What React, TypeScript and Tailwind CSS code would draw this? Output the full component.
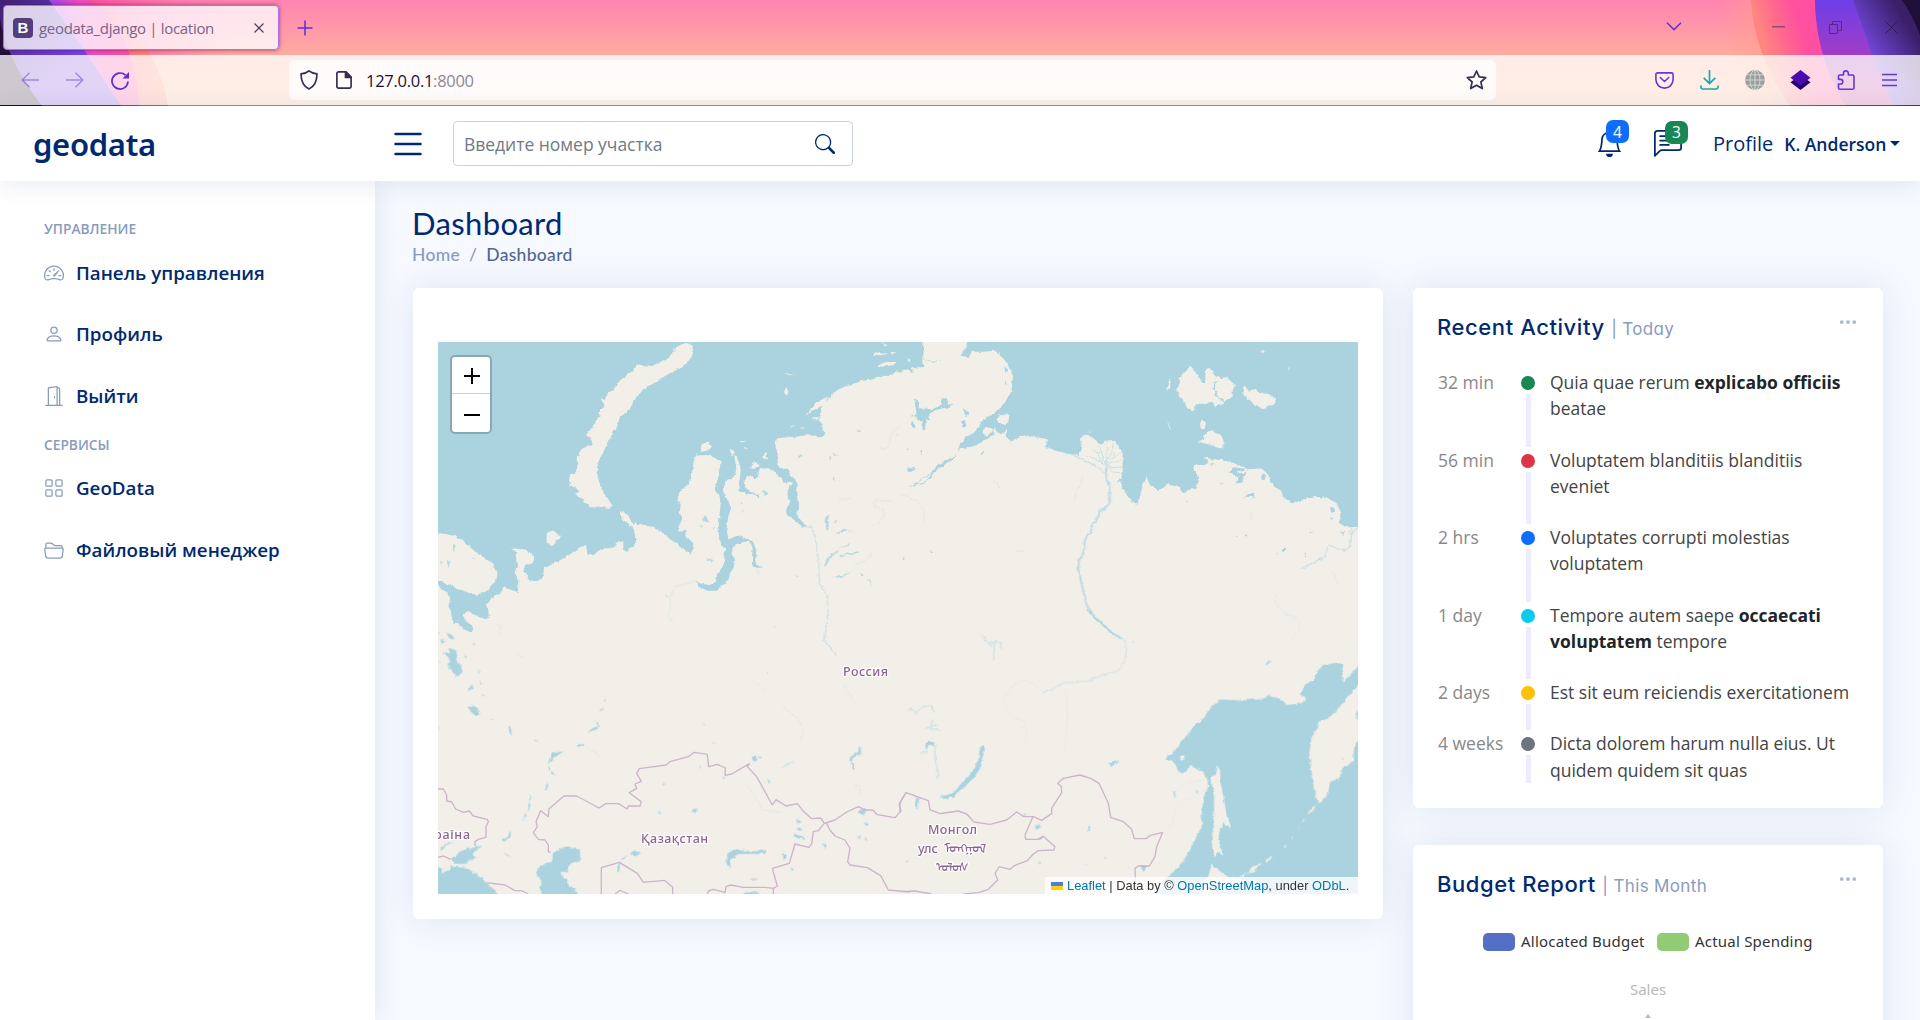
import React from "react";
import {
  BsBell,
  BsChatLeftText,
  BsDoorOpen,
  BsFolder2Open,
  BsGrid,
  BsList,
  BsPerson,
  BsSearch,
  BsSpeedometer2,
  BsThreeDots,
} from "react-icons/bs";

const OPEN = "font-['Open_Sans','Noto_Sans',sans-serif]";

function ThemeArt() {
  return (
    <svg className="absolute inset-0 h-full w-full" viewBox="0 0 1920 106" preserveAspectRatio="none" aria-hidden="true">
      <defs>
        <linearGradient id="sky" x1="0" y1="0" x2="0" y2="106" gradientUnits="userSpaceOnUse">
          <stop offset="0" stopColor="#ff84b2" />
          <stop offset="0.52" stopColor="#ffaba0" />
          <stop offset="1" stopColor="#ffc49a" />
        </linearGradient>
        <linearGradient id="leftPink" x1="50" y1="30" x2="120" y2="10" gradientUnits="userSpaceOnUse">
          <stop offset="0" stopColor="#8a45f0" />
          <stop offset="0.5" stopColor="#f04cc0" />
          <stop offset="1" stopColor="#ff4f9c" />
        </linearGradient>
        <linearGradient id="leftOrange" x1="90" y1="0" x2="175" y2="0" gradientUnits="userSpaceOnUse">
          <stop offset="0" stopColor="#ff4f9c" />
          <stop offset="1" stopColor="#ff9868" />
        </linearGradient>
        <linearGradient id="leftGlow" x1="90" y1="0" x2="240" y2="0" gradientUnits="userSpaceOnUse">
          <stop offset="0" stopColor="#ff4f9c" />
          <stop offset="1" stopColor="#ff84b2" stopOpacity="0" />
        </linearGradient>
        <linearGradient id="leftViolet" x1="0" y1="0" x2="60" y2="70" gradientUnits="userSpaceOnUse">
          <stop offset="0" stopColor="#3d2275" />
          <stop offset="1" stopColor="#7542e8" />
        </linearGradient>
        <linearGradient id="rightOrange" x1="1751" y1="0" x2="1790" y2="-12" gradientUnits="userSpaceOnUse">
          <stop offset="0" stopColor="#ff8580" />
          <stop offset="0.45" stopColor="#ff6a8c" />
          <stop offset="1" stopColor="#ff4fa0" />
        </linearGradient>
        <linearGradient id="rightGlow" x1="1715" y1="0" x2="1775" y2="-14" gradientUnits="userSpaceOnUse">
          <stop offset="0" stopColor="#ff9a8a" stopOpacity="0" />
          <stop offset="1" stopColor="#ffa090" />
        </linearGradient>
        <linearGradient id="rightViolet" x1="1830" y1="0" x2="1830" y2="106" gradientUnits="userSpaceOnUse">
          <stop offset="0" stopColor="#6c3fe8" />
          <stop offset="0.5" stopColor="#a03cc8" />
          <stop offset="1" stopColor="#d040a0" />
        </linearGradient>
        <linearGradient id="rightNight" x1="1858" y1="50" x2="1905" y2="20" gradientUnits="userSpaceOnUse">
          <stop offset="0" stopColor="#7c4df0" />
          <stop offset="1" stopColor="#3a2068" />
        </linearGradient>
      </defs>
      <rect width="1920" height="106" fill="url(#sky)" />
      <path d="M85 0 H240 V55 H150 Z" fill="url(#leftGlow)" />
      <path d="M80 0 H88 C130 18 160 55 168 106 H80Z" fill="url(#leftOrange)" />
      <path d="M40 0 H90 C118 18 138 60 139 106 H60Z" fill="url(#leftPink)" />
      <path d="M0 0H49 L86 53 L121 106 H0Z" fill="url(#leftViolet)" />
      <path d="M0 18 C4 45 18 75 42 106 H0Z" fill="#211038" />
      <path d="M1710 0 H1920 V106 H1740 Z" fill="url(#rightGlow)" />
      <path d="M1751 0 C1753 38 1768 75 1790 106 H1920 V0Z" fill="url(#rightOrange)" />
      <path d="M1815 0 C1815 35 1826 76 1846 106 H1920 V0Z" fill="url(#rightViolet)" />
      <path d="M1853 0 C1860 20 1866 35 1872 55 L1893 106 H1920 V0Z" fill="url(#rightNight)" />
      <path d="M1902 0 C1909 10 1917 25 1920 36 V0Z" fill="#1f0f38" />
    </svg>
  );
}

function BrowserChrome() {
  return (
    <div className={`relative flex h-[106px] w-full flex-col overflow-hidden ${OPEN}`}>
      <ThemeArt />
      <div className="relative flex h-[55px] items-start">
        <div className="mt-[5px] ml-[3px] flex h-[45px] w-[276px] items-center rounded-[4px] border border-[#b06cf0] bg-[#fffbfe]/80 pl-[9px] shadow-[0_0_4px_rgba(80,20,80,0.6)]">
          <div className="flex h-5 w-5 items-center justify-center rounded-[4px] bg-[#563d7c] font-['Liberation_Sans',sans-serif] text-[15px] leading-none font-bold text-white">B</div>
          <span className="ml-[6px] w-[215px] pt-[1px] text-[15px] tracking-[-0.310px] whitespace-nowrap text-[#79638a]">geodata_django | location</span>
          <svg className="h-[10px] w-[10px] shrink-0" viewBox="0 0 10 10" stroke="#4c3a5c" strokeWidth="1.2"><path d="M0.5 0.5 9.5 9.5M9.5 0.5 0.5 9.5" /></svg>
        </div>
        <svg className="mt-[20px] ml-[18px] h-4 w-4" viewBox="0 0 16 16" stroke="#5b2fd0" strokeWidth="1.5"><path d="M8 .5V15.5M.5 8H15.5" /></svg>
        <div className="flex-1" />
        <svg className="mt-[22px] mr-[90px] h-[9px] w-[16px]" viewBox="0 0 16 9" fill="none" stroke="#5b2fd0" strokeWidth="1.5"><path d="M1 .7 8 7.7 15 .7" /></svg>
        <svg className="mt-[26px] mr-[44px] h-[2px] w-[13px]" viewBox="0 0 13 2"><rect y="0.2" width="13" height="1.2" fill="#7c4070" /></svg>
        <svg className="mt-[21px] mr-[43px] h-[13px] w-[13px]" viewBox="0 0 13 13" fill="none" stroke="#552a80"><path d="M.5 3.5h8v9h-8zM3.5 3.5V.5h9v9h-4" /></svg>
        <svg className="mt-[21px] mr-[22px] h-[13px] w-[13px]" viewBox="0 0 13 13" stroke="#33195c"><path d="M.5.5 12.5 12.5M12.5.5.5 12.5" /></svg>
      </div>
      <div className="relative flex h-[50px] items-center bg-[#fffdfb]/78">
        <svg className="ml-[21px] h-[16px] w-[18px]" viewBox="0 0 18 16" fill="none" stroke="#5b2fd0" strokeWidth="1.5" opacity=".45"><path d="M18 8H1M8.500 .7 1.200 8l7.300 7.300" /></svg>
        <svg className="ml-[27px] h-[16px] w-[18px]" viewBox="0 0 18 16" fill="none" stroke="#5b2fd0" strokeWidth="1.5" opacity=".45"><path d="M0 8H17M9.500 .7 16.800 8l-7.300 7.300" /></svg>
        <svg className="mt-[1px] ml-[27px] h-[18px] w-[18px]" viewBox="0 0 18 18" fill="none" stroke="#5b2fd0" strokeWidth="1.7"><path d="M17 9.500A8 8 0 1 1 14.500 3.200" /><path d="M18 0V6.500H11.500Z" fill="#5b2fd0" stroke="none" /></svg>
        <div className="ml-[160px] flex h-[40px] w-[1207px] items-center rounded-[5px] bg-white/80 pl-[11px]">
          <svg className="h-[20px] w-[18px]" viewBox="0 0 18 20" fill="none" stroke="#3b2c52" strokeWidth="1.7"><path d="M9 .9C6.800 2.900 4 3.600 1 3.800 1 10 2.200 15.800 9 19c6.800-3.200 8-9 8-15.200-3-.2-5.800-.9-8-2.900Z" strokeLinejoin="round" /></svg>
          <svg className="ml-[18px] h-[18px] w-[16px]" viewBox="0 0 16 18" fill="none" stroke="#3b2c52" strokeWidth="1.700"><path d="M2.500.9H10L15.100 6v9.500a1.600 1.600 0 0 1-1.600 1.600h-11A1.600 1.600 0 0 1 .9 15.500v-13A1.600 1.600 0 0 1 2.500.9Z" /><path d="M9.500.9V6.500H15Z" fill="#3b2c52" /></svg>
          <span className="mt-[3px] ml-[14px] text-[16.5px] tracking-[-0.28px] text-[#1a0f33]">127.0.0.1<span className="text-[#8f8599]">:8000</span></span>
          <svg className="mr-[9px] ml-auto h-[20px] w-[21px]" viewBox="0 0 21 20" fill="none" stroke="#3b2c52" strokeWidth="1.700" strokeLinejoin="round"><path d="M10.500 1 13.200 6.900 19.700 7.600 14.900 12 16.300 18.600 10.500 15.300 4.700 18.600 6.100 12 1.300 7.600 7.800 6.900Z" /></svg>
        </div>
        <svg className="ml-[159px] h-[17px] w-[19px]" viewBox="0 0 19 17" fill="none" stroke="#6a35d8" strokeWidth="1.600"><path d="M2.500.9h14a1.600 1.600 0 0 1 1.600 1.600V7.500a8.600 8.600 0 0 1-17.200 0V2.500A1.600 1.600 0 0 1 2.500.9Z" /><path d="M5.300 5.500 9.500 9.500 13.700 5.500" strokeLinecap="round" /></svg>
        <svg className="ml-[26px] h-[20px] w-[19px]" viewBox="0 0 19 20" fill="none" stroke="#17aab0" strokeWidth="1.700"><path d="M9.500 0V13M3.700 7.800 9.500 13.500 15.300 7.800M1 15.500v1.600A1.800 1.800 0 0 0 2.800 19H16.200A1.800 1.800 0 0 0 18 17.100V15.500" /></svg>
        <svg className="ml-[26px] h-[20px] w-[20px]" viewBox="0 0 20 20" fill="none"><circle cx="10" cy="10" r="9.900" fill="#9a9f9d" /><path d="M10 0V20M0 10H20M2 4.800H18M2 15.200H18" stroke="#d5d4d0" /><ellipse cx="10" cy="10" rx="5" ry="9.900" stroke="#d5d4d0" /></svg>
        <svg className="ml-[25px] h-[20px] w-[21px]" viewBox="0 0 21 20"><path d="M10.500 5 20.500 12.300 10.500 20 .5 12.300Z" fill="#240070" /><path d="M10.500 0 20.500 7.700 10.500 15.500.5 7.700Z" fill="#4a0bb0" /></svg>
        <svg className="ml-[26px] h-[20px] w-[18px]" viewBox="0 0 18 20" fill="none" stroke="#6a35d8" strokeWidth="1.600"><path d="M6.500 5V3.300a2.400 2.400 0 0 1 4.800 0V5H15.500a1.500 1.500 0 0 1 1.500 1.500V17.500A1.500 1.500 0 0 1 15.500 19.200H3A1.500 1.500 0 0 1 1.500 17.500V14H3.500a2.300 2.300 0 0 0 0-4.600H1.500V6.500A1.500 1.500 0 0 1 3 5Z" strokeLinejoin="round" /></svg>
        <svg className="ml-[27px] h-[14px] w-[15px]" viewBox="0 0 15 14" stroke="#6a35d8" strokeWidth="1.500"><path d="M0 1.500H15M0 7H15M0 12.500H15" /></svg>
      </div>
      <div className="relative h-px bg-black/30" />
    </div>
  );
}

function Header() {
  return (
    <header className="relative z-20 flex h-[75px] items-center bg-white text-[#012970] shadow-[0_2.5px_25px_rgba(1,41,112,0.1)]">
      <div className="w-[388px] pt-[2px] pl-[33px] font-['Noto_Sans',sans-serif] text-[31px] leading-none font-semibold tracking-[-0.3px]">geodata</div>
      <BsList className="h-[40px] w-[40px]" />
      <div className="ml-[25px] flex h-[45px] w-[400px] items-center justify-between rounded-[4px] border border-[#012970]/20 pr-[17px] pl-[10px]">
        <span className={`${OPEN} pt-[2px] text-[17.500px] tracking-[-0.03px] text-[#707a85]`}>Введите номер участка</span>
        <BsSearch className="h-[20px] w-[20px]" />
      </div>
      <div className="relative ml-[743px]">
        <BsBell className="h-[27px] w-[27px]" />
        <span className={`${OPEN} absolute -top-[10px] left-[10px] flex h-[23px] w-[23px] items-center justify-center rounded-[7px] bg-[#0d6efd] pt-[2px] text-[15.500px] text-white`}>4</span>
      </div>
      <div className="relative ml-[31px]">
        <BsChatLeftText className="h-[28px] w-[28px]" />
        <span className={`${OPEN} absolute -top-[9px] left-[11px] flex h-[23px] w-[23px] items-center justify-center rounded-[7px] bg-[#198754] pt-[2px] text-[15.500px] text-white`}>3</span>
      </div>
      <span className={`${OPEN} ml-[31px] text-[20px]`}>Profile</span>
      <span className={`${OPEN} ml-[11px] pt-[1px] text-[17.500px] font-semibold`}>K. Anderson</span>
      <span className="ml-[4px] h-0 w-0 border-x-[5px] border-t-[5px] border-x-transparent border-t-[#012970]" />
    </header>
  );
}

function NavItem({ icon, label }: { icon: React.ReactNode; label: string }) {
  return (
    <a className="mb-[6px] flex h-[55.5px] items-center pl-[19px] text-[18.750px] font-semibold text-[#012970]">
      <span className="mr-[12px] text-[20px] text-[#899bbd]">{icon}</span>
      <span className="whitespace-nowrap">{label}</span>
    </a>
  );
}

function Sidebar() {
  return (
    <aside className={`${OPEN} z-10 w-[375px] shrink-0 bg-white px-[25px] pt-[38px] shadow-[0_0_25px_rgba(1,41,112,0.1)]`}>
      <div className="h-[26px] pl-[19px] text-[13.750px] leading-[19px] font-semibold text-[#899bbd]">УПРАВЛЕНИЕ</div>
      <NavItem icon={<BsSpeedometer2 />} label="Панель управления" />
      <NavItem icon={<BsPerson />} label="Профиль" />
      <NavItem icon={<BsDoorOpen />} label="Выйти" />
      <div className="mt-[11px] h-[26px] pl-[19px] text-[13.750px] leading-[19px] font-semibold text-[#899bbd]">СЕРВИСЫ</div>
      <NavItem icon={<BsGrid />} label="GeoData" />
      <NavItem icon={<BsFolder2Open />} label="Файловый менеджер" />
    </aside>
  );
}

/* Each tile of the map is drawn on its own grid of thirds of a pixel. */
const NW = "translate(430 330) scale(.33333)";
const NE = "translate(900 330) scale(.33333)";
const SW = "translate(430 610) scale(.33333)";
const SE = "translate(900 610) scale(.33333)";

function MapDrawing() {
  return (
    <svg className="absolute inset-0 h-full w-full bg-[#f2efe9]" viewBox="438 342 920 552" aria-label="Map">
      <defs>
        <filter id="coast" x="400" y="300" width="1000" height="640" filterUnits="userSpaceOnUse" colorInterpolationFilters="sRGB">
          <feTurbulence type="fractalNoise" baseFrequency="0.2" numOctaves="3" seed="4" result="n" />
          <feDisplacementMap in="SourceGraphic" in2="n" scale="4" xChannelSelector="R" yChannelSelector="G" />
          <feGaussianBlur stdDeviation="0.4" />
        </filter>
      </defs>
      <g filter="url(#coast)" fill="#aad3df" stroke="none">
        <g transform={NW}>
          <path d="M-20 0H1480V112L1440 112 1425 118 1412 128 1398 124 1388 132 1370 138 1355 137 1335 146 1300 152 1275 160 1240 172 1222 180 1205 195 1192 212 1180 228 1172 245 1172 262 1165 270 1178 280 1178 300 1186 308 1180 320 1165 322 1150 314 1128 316 1100 320 1070 322 1040 326 1036 345 1044 362 1042 405 1055 412 1072 418 1078 432 1095 448 1103 462 1098 480 1102 510 1108 535 1100 550 1112 570 1128 588 1118 592 1100 575 1085 565 1072 560 1068 540 1078 520 1072 490 1075 470 1092 462 1085 455 1062 458 1050 440 1035 425 1015 415 990 415 985 428 988 440 975 448 962 440 950 440 942 455 948 475 965 485 985 495 993 508 975 494 940 490 925 480 928 455 932 420 928 400 920 380 912 375 916 395 922 415 918 435 905 445 888 455 878 480 885 495 895 512 903 535 895 560 890 595 895 628 918 622 935 618 955 628 972 640 978 660 982 675 975 690 980 705 1000 712 980 714 966 705 966 680 968 650 955 632 930 640 908 650 905 672 915 690 910 715 900 730 895 750 880 765 860 782 835 782 805 770 795 755 820 762 840 765 858 752 862 735 878 712 885 690 880 670 888 658 875 645 868 630 865 600 868 560 872 520 868 495 855 478 862 455 868 420 872 395 860 385 835 376 802 376 798 372 790 400 785 440 775 465 755 482 745 495 742 515 752 520 750 545 755 570 745 590 748 605 765 600 770 620 790 640 788 660 780 675 765 660 745 645 720 628 695 605 670 590 640 585 615 580 605 590 618 615 618 635 610 650 596 655 595 665 583 665 580 650 580 632 565 640 545 655 525 655 508 660 490 676 472 670 468 645 445 655 430 668 400 685 375 700 342 712 340 735 335 748 300 752 292 745 290 730 278 720 290 705 312 698 312 685 302 668 285 658 265 658 243 652 260 668 262 690 260 712 254 732 265 745 265 775 262 790 245 780 220 772 210 790 190 800 168 822 172 840 180 858 165 868 140 858 122 848 105 845 98 855 105 870 120 880 130 895 125 908 100 898 85 880 68 878 62 840 55 830 62 800 45 785 24 765 -20 750Z" />
          <path fill="#f2efe9" d="M-20 605 24 608 45 612 75 618 100 632 125 655 140 670 165 685 190 703 200 735 195 755 175 780 140 795 115 788 90 780 60 765 24 752 -20 740ZM768 38 785 45 790 62 785 80 770 100 745 118 715 132 690 148 660 165 640 180 620 200 605 225 598 240 585 250 570 262 560 290 550 305 540 325 530 345 518 370 505 395 503 440 510 465 520 488 535 508 546 525 540 537 520 532 498 530 480 528 462 515 440 495 435 485 450 490 435 470 420 470 417 450 420 432 435 432 442 410 440 380 455 365 460 350 485 345 480 325 468 315 480 300 495 280 508 262 510 240 525 230 512 205 525 210 535 190 550 180 560 165 575 145 605 125 625 103 650 110 690 100 715 85 728 65 740 50ZM570 543 585 548 608 578 612 588 600 587 580 570 570 558ZM350 610 368 600 390 618 370 645 350 642ZM815 340 830 335 848 352 830 362 812 366ZM900 362 908 358 912 372 905 376ZM1005 365 1015 385 1000 386ZM960 412 978 396 990 405 970 418ZM1068 172 1076 182 1070 200 1062 186ZM1065 132 1095 132 1070 136ZM1080 285 1100 286 1082 289ZM1110 290 1125 295 1112 297ZM930 332 955 335 935 336ZM942 350 955 354 945 357ZM1010 245 1016 248 1012 252ZM1325 75 1350 66 1375 72 1350 76ZM1350 40 1375 45 1365 48ZM1380 68 1400 70 1385 74ZM1340 108 1365 96 1400 96 1390 106 1360 110ZM1430 85 1440 88 1440 100ZM1160 215 1195 200 1185 225 1160 235 1125 258 1145 235ZM1145 262 1170 262 1160 270Z" />
          <g opacity=".8">
            <path d="M50 690 60 695 55 712ZM70 640 78 648 68 670ZM125 683 138 684 126 688ZM30 690 36 692 32 705ZM818 565 828 558 835 572 822 575ZM812 585 820 588 815 592ZM830 685 850 690 845 697ZM848 590 854 594 850 597ZM995 480 1018 490 1005 498ZM932 520 938 522 935 527ZM932 540 938 542 935 546ZM1106 375 1120 380 1108 384ZM1280 300 1292 302 1284 308ZM1400 312 1406 318 1400 320ZM1195 380 1205 385 1200 392ZM1208 368 1222 378 1212 378ZM1208 440 1214 444 1210 456ZM1186 560 1196 555 1197 595 1190 598 1184 575ZM1215 608 1240 596 1258 600 1225 608ZM1182 710 1190 685 1225 660 1220 668 1200 685 1190 705ZM1230 675 1285 664 1285 669 1235 678ZM1225 655 1252 645 1262 635 1255 648ZM1210 575 1220 572 1215 580ZM1252 605 1270 605 1255 608ZM1205 742 1262 728 1235 742ZM1290 728 1302 735 1295 740ZM1308 745 1322 752 1328 775 1320 755ZM1415 683 1425 686 1418 689ZM1430 415 1440 412 1440 424ZM705 795 712 800 706 806ZM1098 735 1104 738 1100 742Z" />
          </g>
        </g>
        <g transform={NE}>
          <path d="M0 0H1420V592L1374 590 1340 592 1318 580 1322 545 1310 520 1285 505 1250 500 1210 508 1180 518 1155 510 1145 485 1120 468 1110 450 1105 435 1085 415 1045 418 1000 398 965 390 935 388 912 380 925 395 915 405 882 405 880 420 890 430 895 450 890 475 865 480 850 490 835 472 810 463 790 470 775 480 750 465 740 442 728 465 720 500 710 524 700 520 680 495 665 470 668 435 668 370 660 355 640 330 615 332 605 345 580 325 560 312 540 325 545 360 535 375 500 370 460 360 437 350 445 328 400 320 375 316 350 325 330 335 322 318 290 312 270 322 240 340 215 350 180 355 165 382 125 410 100 430 95 440 75 455 40 470 40 466 75 452 92 435 100 422 115 405 150 385 172 370 178 345 195 325 220 310 235 290 250 270 270 258 300 235 325 205 335 180 338 145 330 115 318 95 305 80 285 62 250 65 215 65 208 80 182 78 195 55 200 25 70 25 63 50 70 72 60 85 20 85 38 120 35 130 20 110 0 115Z" />
          <path fill="#f2efe9" d="M872 108 885 125 895 135 905 158 915 160 918 118 930 115 945 138 962 145 980 142 1008 168 998 178 998 200 975 212 955 200 945 180 946 160 957 152 944 155 940 175 945 198 960 208 975 215 965 222 945 228 935 215 905 222 888 220 882 242 865 235 850 215 835 195 832 180 840 155 838 145 850 128ZM1033 165 1045 182 1065 178 1080 190 1105 192 1128 205 1120 225 1090 235 1065 228 1050 210 1030 195ZM808 145 814 165 805 182 799 180ZM905 272 918 275 915 295 905 298 900 285ZM935 300 960 312 970 330 970 354 945 348 915 340 892 340 912 330 915 310ZM800 275 815 298 810 298ZM1080 66 1096 62 1088 70ZM1163 112 1170 114 1166 120ZM298 252 328 255 325 275 315 286 290 270ZM250 298 265 290 278 300 262 318 248 310ZM280 290 300 312 315 310 322 296 320 320 285 322ZM565 298 572 302 566 306Z" />
          <path d="M42 205 58 215 55 235 95 238 125 225 128 205 140 205 145 222 165 226 140 232 100 242 88 250 90 270 78 270 75 300 65 300 66 275 45 262 30 262 50 252ZM35 275 44 280 42 298 36 295ZM190 235 205 250 200 258 190 250ZM182 278 195 272 202 284 190 290ZM60 362 70 365 65 375ZM20 415 48 415 45 420 30 426 18 424ZM245 368 252 362 252 370 244 375ZM65 85 95 95 125 94 95 99ZM90 660 98 664 93 670ZM20 355 28 357 22 360ZM313 110 322 120 316 130ZM312 150 322 165 313 162ZM932 398 942 398 938 408ZM985 425 1000 412 1040 416 1010 425 1030 432 1045 418 1025 458 1005 460 1018 440 1000 438ZM1088 430 1098 435 1094 450 1086 445ZM960 455 968 460 962 464ZM1030 505 1045 492 1060 492 1066 504 1048 500ZM1290 535 1304 535 1305 545 1294 548ZM1290 562 1300 565 1296 574ZM1320 605 1332 602 1330 616ZM1033 615 1043 612 1038 620ZM1007 620 1013 622 1009 625ZM1230 602 1242 603 1232 606ZM1145 660 1160 650 1150 668ZM1214 667 1222 672 1215 680ZM1130 672 1136 674 1132 678ZM1100 670 1104 672 1101 675ZM655 445 668 448 668 458 655 456ZM858 512 865 516 860 520ZM555 700 563 702 558 705ZM5 682 14 687 8 690Z" />
          <path fill="none" stroke="#c4dee4" strokeWidth="3" opacity=".9" d="M612 408 598 380 580 360M612 408 606 365 595 345M614 405 622 370 618 340M615 402 632 375 640 345M616 402 645 382 662 365M618 404 650 395 668 392M618 406 645 412 668 412M618 408 640 425 665 430M610 400 585 385 560 378M606 365 590 372M645 382 640 362" />
        </g>
        <g transform={SW}>
          <path d="M-20 768 24 768 35 775 35 790 60 780 62 768 90 772 110 772 135 790 160 810 178 828 195 840 206 870H-20ZM62 745 75 740 88 725 120 715 158 706 140 720 128 730 138 745 115 750 108 762 78 762 65 755ZM412 712 450 718 450 755 425 758 412 775 415 787 392 785 400 800 412 808 415 825 442 842 440 870H340L330 835 335 815 318 787 330 768 365 755 368 730 390 716ZM887 750 895 728 920 718 950 722 980 724 1010 720 1005 730 960 732 925 732 900 750 903 775 890 765ZM1055 730 1066 733 1070 745 1058 748ZM940 850 970 842 988 846 975 860H940ZM1288 600 1305 596 1308 608 1298 616 1288 608ZM1300 638 1318 642 1310 648ZM1090 670 1122 682 1126 690 1095 682ZM1104 630 1118 636 1100 640ZM1098 655 1112 652 1112 665ZM1175 702 1187 702 1184 714ZM1282 685 1290 674 1288 688ZM1303 680 1314 692 1306 690ZM1080 768 1092 776 1086 780ZM965 805 985 808 968 811ZM785 605 790 596 803 596 795 608ZM684 600 690 604 686 616ZM700 518 706 522 698 528ZM562 770 570 758 568 790 563 785ZM570 750 580 740 592 736 578 748ZM600 728 610 720 630 732 615 740ZM965 445 975 438 982 448 970 456ZM985 440 998 440 986 446ZM1012 508 1020 512 1018 524ZM878 500 886 502 882 508ZM1053 475 1095 446 1070 468ZM808 470 812 472 808 476ZM848 395 858 398 848 400ZM1008 186 1015 188 1010 192ZM1030 52 1048 50 1034 54ZM820 342 827 343 822 346ZM435 405 450 402 465 408 448 412ZM365 435 375 424 398 424 378 438 365 452 352 462 358 448ZM352 465 362 478 358 485ZM365 485 375 497 362 495ZM343 540 352 515 355 522 346 542ZM298 555 305 558 297 578ZM295 580 302 582 295 605ZM285 612 292 610 280 632ZM218 690 235 675 245 660 240 680 222 695ZM220 725 250 742 225 732ZM237 348 244 350 244 376 237 365ZM312 388 325 396 318 398ZM505 300 520 292 522 282 520 300ZM520 270 530 268 522 275ZM473 370 485 355 503 348 495 335 506 340 502 355ZM113 232 128 228 130 238 118 242ZM112 290 130 290 122 278 135 292 148 298 150 312 140 320 125 308ZM40 125 60 130 55 112 80 122 82 148 98 180 90 195 78 203 75 190 60 178 52 158 62 155ZM50 65 60 72 75 85 62 88ZM30 88 42 88 44 98 34 96ZM24 62 32 66 26 74ZM104 132 110 138 106 146ZM144 180 149 182 146 190ZM148 210 155 218 152 226ZM152 250 168 262 160 260ZM184 325 192 327 186 330ZM24 350 28 352 25 358ZM30 715 60 695 70 695 50 706 38 718ZM24 153 32 155 26 160ZM128 98 135 104 129 106ZM1262 440 1285 425 1286 405 1294 425 1290 434 1270 442 1264 455 1275 470 1270 482 1258 450Z" />
        </g>
        <g transform={SE}>
          <path d="M1420 150 1374 170 1355 190 1330 215 1325 195 1330 160 1310 158 1270 165 1250 185 1245 205 1215 225 1198 250 1220 268 1200 280 1160 285 1145 268 1105 255 1085 270 1055 265 1030 272 960 268 935 290 915 320 880 350 850 390 820 425 795 447 825 460 835 485 850 490 870 468 900 480 920 500 925 530 910 560 905 610 905 650 885 690 860 740 830 775 800 805 760 852 740 900H1420Z" />
          <path fill="#f2efe9" d="M950 465 960 480 962 520 970 560 980 610 995 655 970 640 958 660 955 690 970 735 955 725 945 745 937 715 935 690 940 650 942 600 942 560 932 500 945 495ZM935 760 960 785 985 800 1030 805 1000 830 960 830 930 850 900 860 900 830 925 800ZM1420 180 1374 225 1320 290 1285 325 1255 335 1255 355 1235 380 1228 430 1235 500 1245 550 1255 582 1285 550 1290 515 1320 505 1325 475 1360 455 1362 410 1374 395 1420 390ZM1230 600 1248 586 1240 602 1220 614ZM1208 630 1214 628 1206 642ZM1195 655 1200 652 1194 662ZM1095 752 1115 738 1118 742 1100 758ZM1050 780 1065 765 1085 758 1060 784 1035 792ZM1175 682 1180 680 1178 690ZM1152 708 1160 702 1154 715ZM840 438 852 436 854 448 842 452ZM1020 798 1035 790 1030 805Z" />
          <path d="M1366 315 1374 298 1400 290V335L1370 330ZM250 408 255 415 245 450 240 475 220 505 195 528 175 545 160 562 130 567 122 560 155 550 180 525 205 500 220 480 235 450 240 415ZM48 562 60 565 55 585 52 600 46 590ZM628 460 660 450 640 466 632 472ZM405 650 420 640 418 652 408 662ZM725 768 742 768 738 780 728 785ZM370 610 382 612 374 618ZM412 686 428 680 424 690ZM1095 170 1100 155 1115 150 1100 165ZM820 545 826 548 822 565ZM888 540 896 545 890 548ZM1325 445 1331 448 1326 451ZM565 645 572 655 565 662ZM612 742 622 743 615 746ZM555 765 563 766 558 770ZM412 758 422 758 416 763ZM22 752 27 755 23 758ZM75 405 85 395 105 395 100 408 85 405 80 420ZM575 77 585 78 576 81ZM697 92 705 94 698 96Z" />
        </g>
        <g fill="none" stroke="#aad3df" strokeLinecap="round" strokeLinejoin="round">
          <g transform={NE}>
            <path strokeWidth="6" opacity=".75" d="M618 410 620 445 628 470 630 515 615 538 595 542 598 558 580 578 572 605 555 630 550 670 537 690 535 715 542 750 552 790 560 825 575 850 592 870 640 912 665 925" />
            <path strokeWidth="4" opacity=".5" d="M618 430 585 405 545 388 510 370 470 362M1352 592 1350 650 1335 660 1285 646 1275 680 1235 700 1205 716M1375 590 1355 612M100 425 30 470" />
            <path strokeWidth="2" opacity=".35" d="M550 440 545 465 530 482 522 512M280 450 295 462 296 475M345 662 372 664M1130 790 1125 815 1150 850 1190 862M1052 545 1058 575M1300 725 1315 765M0 495 30 500 60 520 72 545 70 570 80 590" />
          </g>
          <g transform={NW}>
            <path strokeWidth="4" opacity=".45" d="M1115 590 1145 592 1155 620 1165 680 1168 760 1190 795 1195 860 1188 900 1182 930 1218 975" />
            <path strokeWidth="2.500" opacity=".35" d="M1225 512 1260 505M1390 514 1340 512 1328 522 1360 540 1362 560 1330 590M795 752 755 765 735 770 720 800 722 835 712 848 724 875M980 715 985 735M1410 285 1390 305 1370 355 1350 358M1330 665 1305 692 1275 705" />
          </g>
          <g transform={SE}>
            <path strokeWidth="5" opacity=".8" d="M562 0 580 20 620 55 650 82" />
            <path strokeWidth="3" opacity=".5" d="M650 82 670 85 680 115 675 150 655 182 600 198 560 215 490 218 460 235 432 250" />
            <path strokeWidth="2" opacity=".25" d="M432 250 400 220 370 210 340 225 312 260 320 300 345 325 375 335 380 390M480 225 500 250 502 330 495 420M1150 0 1170 22 1200 35 1200 60 1170 90M925 530 890 560 850 575 825 600 820 640 800 658M905 510 860 515 825 545" />
            <path strokeWidth="3.500" opacity=".55" d="M245 75 262 95 280 98 300 95 303 115M285 95 280 152M262 100 275 110M28 297 50 310 65 290 95 288 102 305M100 330 90 355 118 362M75 355 110 345M85 395 105 410 105 450 115 490 110 505M60 430 85 425" />
          </g>
          <g transform={SW}>
            <path strokeWidth="2" opacity=".35" d="M195 40 212 50 208 75M255 133 282 142M970 212 1005 240M1240 222 1275 280M1060 290 1105 330 1120 360 1110 395M470 410 500 430 515 445M955 530 980 570 1000 600 1060 606M1270 522 1288 530 1292 562" />
          </g>
        </g>
      </g>
      <g fill="none" stroke="#c7aac5" strokeWidth="4" strokeLinejoin="round" opacity=".85">
        <path transform={SW} d="M24 537 40 537 50 555 50 573 65 576 77 597 100 607 118 603 130 618 172 628 175 635 168 650 168 682 145 688 135 695 135 708M24 742 40 738 62 748M170 818 225 825 255 842 275 842 295 852M362 728 355 725 355 705 345 690 325 688 310 668 322 650 318 635 332 602 355 620 357 596 402 558 440 558 507 594 528 581 565 581 592 597 595 588 630 588 634 575 598 548 620 535 615 522 634 514 620 490 628 476 708 465 720 455 775 440 792 427 832 433 836 470 862 463 886 474 885 496 905 492 958 461 952 470 980 500 1027 585 1038 569 1068 588 1102 581 1120 604 1145 626 1172 624 1183 640 1165 662 1150 665 1145 700 1137 712 1095 702 1078 760 1027 775 1042 828 1030 835 1030 852M1030 835 1005 832 940 832 903 825 888 830 885 847 850 838 835 843 832 852M514 852V773L568 757 622 790 640 817 703 811 728 832V852M555 852 570 841 595 852M1183 640 1215 630 1250 606 1285 590 1305 600 1328 600 1342 614 1395 623 1413 603 1407 582 1428 548M1190 640 1200 660 1215 678 1245 690 1260 715 1253 755 1260 765 1312 773 1352 797 1375 840 1440 846" />
        <path transform={SE} d="M0 605 0 578 18 548 85 572 90 600 120 611 175 603 200 612 222 636 270 643 320 630 350 606 372 620 400 620 425 631 455 611 455 595 485 548 484 530 473 520 490 505 540 495 572 505 597 520 625 580 632 622 670 635 695 658 703 686 738 686 752 676 788 667 770 710 765 740 748 768 715 768 705 775 708 852M398 622 375 675 377 688 415 688 430 679 465 710 462 720 415 722 400 732 382 752 345 766 330 778 298 770 285 790 293 810 265 838 235 848 190 852M0 845 45 843 95 852" />
      </g>
      <g fontFamily="'Noto Sans',sans-serif" fontSize="12.5" fontWeight="500" fill="#8a6590" stroke="#fff" strokeOpacity=".85" strokeWidth="2.400" paintOrder="stroke" strokeLinejoin="round">
        <text x="843" y="676" textLength="45">Россия</text>
        <text x="641" y="843" textLength="67">Қазақстан</text>
        <text x="434" y="839" textLength="36">раїна</text>
        <text x="928" y="834" textLength="49">Монгол</text>
        <text x="918" y="853">улс</text>
        <text x="944" y="853" textLength="42" lengthAdjust="spacingAndGlyphs">ᠮᠣᠩᠭᠣᠯ</text>
        <text x="936" y="872" textLength="33" lengthAdjust="spacingAndGlyphs">ᠤᠯᠤᠰ</text>
      </g>
    </svg>
  );
}

function MapCard() {
  return (
    <section className="h-[631px] w-[970px] rounded-[6px] bg-white px-[25px] pt-[54px] shadow-[0_0_37px_rgba(1,41,112,0.1)]">
      <div className="relative h-[552px] w-[920px] overflow-hidden">
        <MapDrawing />
        <div className="absolute top-[13px] left-[12px] flex w-[42px] flex-col overflow-hidden rounded-[5px] border-2 border-black/20 bg-white bg-clip-padding">
          <button className="flex h-[37px] items-center justify-center border-b border-[#ccc] pt-[2px] pl-[2px]">
            <svg className="h-4 w-4" viewBox="0 0 16 16"><path d="M0 7h16v2H0zM7 0h2v16H7z" /></svg>
          </button>
          <button className="flex h-[38px] items-center justify-center pt-[3px] pl-[2px]">
            <svg className="h-4 w-4" viewBox="0 0 16 16"><path d="M0 7h16v2H0z" /></svg>
          </button>
        </div>
        <div className="absolute right-0 bottom-0 flex h-[17px] w-[313px] items-center bg-white/80 pl-[6px] font-['Liberation_Sans',sans-serif] text-[12.900px] leading-[17px] whitespace-nowrap text-[#333]">
          <span className="mr-[4px] h-[8px] w-[12px] border-b-4 border-[#ffd500] bg-[#4c7be1]" />
          <span className="-mt-px"><span className="text-[#0078a8]">Leaflet</span> | Data by © <span className="text-[#0078a8]">OpenStreetMap</span>, under <span className="text-[#0078a8]">ODbL</span>.</span>
        </div>
      </div>
    </section>
  );
}

function CardTitle({ title, sub }: { title: string; sub: string }) {
  return (
    <div className="flex items-start justify-between">
      <h5 className="-ml-px font-['Inter',sans-serif] text-[22px] leading-[27px] font-medium tracking-[0.580px] whitespace-nowrap text-[#012970] [font-feature-settings:'cv11']">
        {title} <span className="text-[17px] font-normal tracking-[0.350px] text-[#899bbd]">| {sub}</span>
      </h5>
      <BsThreeDots className="mt-[-2px] h-[20px] w-[20px] text-[#aab7cf]" />
    </div>
  );
}

const activities: { when: string; dot: string; text: React.ReactNode }[] = [
  { when: "32 min", dot: "bg-[#198754]", text: <>Quia quae rerum <b className="font-bold text-[#212529]">explicabo officiis</b> beatae</> },
  { when: "56 min", dot: "bg-[#dc3545]", text: "Voluptatem blanditiis blanditiis eveniet" },
  { when: "2 hrs", dot: "bg-[#0d6efd]", text: "Voluptates corrupti molestias voluptatem" },
  { when: "1 day", dot: "bg-[#0dcaf0]", text: <>Tempore autem saepe <b className="font-bold text-[#212529]">occaecati voluptatem</b> tempore</> },
  { when: "2 days", dot: "bg-[#ffc107]", text: "Est sit eum reiciendis exercitationem" },
  { when: "4 weeks", dot: "bg-[#6c757d]", text: "Dicta dolorem harum nulla eius. Ut quidem quidem sit quas" },
];

function ActivityCard() {
  return (
    <section className="h-[520px] rounded-[6px] bg-white px-[25px] pt-[26px] shadow-[0_0_37px_rgba(1,41,112,0.1)]">
      <CardTitle title="Recent Activity" sub="Today" />
      <div className={`${OPEN} mt-[26px] text-[17.500px] leading-[26.250px]`}>
        {activities.map((a, i) => (
          <div key={a.when} className={`flex ${i < activities.length - 1 ? "pb-[25px]" : ""}`}>
            <div className="w-[80px] whitespace-nowrap text-[#888]">{a.when}</div>
            <div className={`relative w-[32px] ${i < activities.length - 1 ? "-mb-[25px]" : ""}`}>
              <div className="absolute inset-y-0 left-[8px] w-[5px] bg-[#ececfe]" />
              <div className="absolute top-0 left-0 h-[25px] w-[20px] bg-white" />
              <div className={`absolute top-[7px] left-[2.500px] h-[14px] w-[14px] rounded-full ${a.dot}`} />
            </div>
            <div className="-mr-2 w-[312px] text-[#444]">{a.text}</div>
          </div>
        ))}
      </div>
    </section>
  );
}

function BudgetCard() {
  return (
    <section className="mt-[37px] h-[500px] rounded-[6px] bg-white px-[25px] pt-[26px] shadow-[0_0_37px_rgba(1,41,112,0.1)]">
      <CardTitle title="Budget Report" sub="This Month" />
      <div className="mt-[33px] flex items-center justify-center font-['Noto_Sans',sans-serif] text-[15px] leading-[20px] tracking-[0.210px] text-[#333]">
        <span className="mr-[6px] h-[18px] w-[32px] rounded-[5px] bg-[#5470c6]" />
        <span className="-mt-[2px] w-[124px] whitespace-nowrap">Allocated Budget</span>
        <span className="mr-[6px] ml-[12px] h-[18px] w-[32px] rounded-[5px] bg-[#91cc75]" />
        <span className="-mt-[2px] w-[118px] whitespace-nowrap">Actual Spending</span>
      </div>
      <div className="mt-[27px] text-center font-['Noto_Sans',sans-serif] text-[15px] leading-[22px] text-[#b9b9b9]">Sales</div>
      <svg className="mx-auto mt-[14px] block h-[8px] w-[8px]" viewBox="0 0 8 8"><path d="M4 0 7 4H1Z" fill="#b9b9c2" /></svg>
    </section>
  );
}

export default function App() {
  return (
    <div className="flex h-[1020px] w-[1920px] flex-col overflow-hidden bg-[#f6f9ff]">
      <BrowserChrome />
      <Header />
      <div className="flex min-h-0 flex-1">
        <Sidebar />
        <main className="flex-1 px-[38px] pt-[24px]">
          <div className="-ml-px font-['Lato',sans-serif]">
            <h1 className="text-[31px] leading-[36px] font-normal tracking-[0.350px] text-[#012970]">Dashboard</h1>
            <nav className="mt-[1px] flex h-[27px] items-center text-[17.500px] font-medium tracking-[0.300px] text-[#899bbd]">
              <span>Home</span>
              <span className="mx-[9px]">/</span>
              <span className="text-[#51678f]">Dashboard</span>
            </nav>
          </div>
          <div className="mt-[19px] flex gap-[30px]">
            <MapCard />
            <div className="w-[470px]">
              <ActivityCard />
              <BudgetCard />
            </div>
          </div>
        </main>
      </div>
    </div>
  );
}
